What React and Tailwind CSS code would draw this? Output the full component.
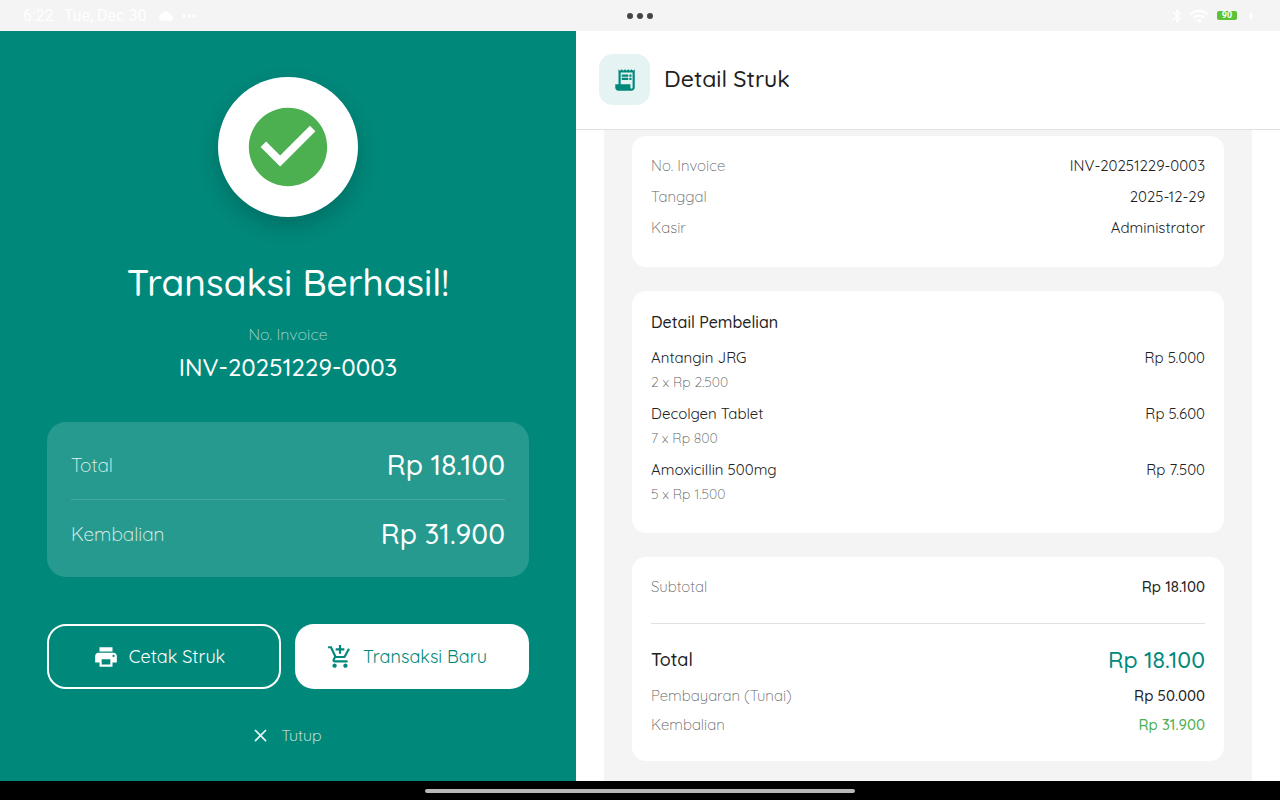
import {
  MdAddShoppingCart,
  MdBluetooth,
  MdBolt,
  MdCheckCircle,
  MdClose,
  MdCloud,
  MdMoreHoriz,
  MdPrint,
  MdReceiptLong,
  MdWifi,
} from "react-icons/md";

const info = [
  ["No. Invoice", "INV-20251229-0003"],
  ["Tanggal", "2025-12-29"],
  ["Kasir", "Administrator"],
];

const items = [
  { name: "Antangin JRG", detail: "2 x Rp 2.500", total: "Rp 5.000" },
  { name: "Decolgen Tablet", detail: "7 x Rp 800", total: "Rp 5.600" },
  { name: "Amoxicillin 500mg", detail: "5 x Rp 1.500", total: "Rp 7.500" },
];

function StatusBar() {
  return (
    <header className="grid h-[31px] shrink-0 grid-cols-3 items-center bg-[#f4f4f4] px-[23px] font-['Roboto',sans-serif] text-base text-white">
      <div className="flex items-center gap-[10px]">
        <span>6:22</span>
        <span>Tue, Dec 30</span>
        <MdCloud className="ml-[3px] size-[14px]" />
        <MdMoreHoriz className="-ml-1 size-5" />
      </div>
      <div className="flex justify-center gap-1">
        <span className="size-[6px] rounded-full bg-[#444]" />
        <span className="size-[6px] rounded-full bg-[#444]" />
        <span className="size-[6px] rounded-full bg-[#444]" />
      </div>
      <div className="flex items-center justify-end gap-1">
        <MdBluetooth className="size-4" />
        <MdWifi className="size-5" />
        <span className="ml-1 flex h-[9px] w-5 items-center justify-center rounded-[2px] bg-[#5cc234] text-[9px] leading-none font-bold">
          90
        </span>
        <MdBolt className="ml-1 size-3" />
      </div>
    </header>
  );
}

function SuccessPanel() {
  return (
    <section className="flex w-[45%] flex-col items-center bg-[#00897b] px-[47px] pt-[46px] text-white">
      <div className="flex size-[140px] items-center justify-center rounded-full bg-white shadow-[0_9px_24px_rgba(0,0,0,0.2)]">
        <MdCheckCircle className="size-[94px] text-[#4caf50]" />
      </div>
      <h1 className="mt-[41px] text-[37px] leading-[48px] font-medium">Transaksi Berhasil!</h1>
      <p className="mt-[18px] text-base leading-5 font-light text-white/70">No. Invoice</p>
      <p className="mt-2 text-[24px] leading-[30px] font-medium">INV-20251229-0003</p>

      <dl className="mt-10 w-full rounded-[19px] bg-white/15 p-6">
        <div className="flex h-[38px] items-center justify-between">
          <dt className="text-[19px] font-light text-white/90">Total</dt>
          <dd className="text-[28px] font-medium">Rp 18.100</dd>
        </div>
        <div className="mt-[15px] flex items-center justify-between border-t border-white/15 pt-[15px]">
          <dt className="text-[19px] font-light text-white/90">Kembalian</dt>
          <dd className="text-[28px] leading-[38px] font-medium">Rp 31.900</dd>
        </div>
      </dl>

      <div className="mt-[47px] grid w-full grid-cols-2 gap-[14px]">
        <button
          type="button"
          className="flex h-[65px] items-center justify-center gap-[10px] rounded-[19px] border-2 border-white pr-[10px] text-lg"
        >
          <MdPrint className="size-[26px]" />
          Cetak Struk
        </button>
        <button
          type="button"
          className="flex h-[65px] items-center justify-center gap-[10px] rounded-[19px] bg-white pr-[10px] text-lg text-[#00897b]"
        >
          <MdAddShoppingCart className="size-[26px]" />
          Transaksi Baru
        </button>
      </div>

      <button
        type="button"
        className="mt-[34px] flex items-center gap-[10px] pr-1 text-base leading-6 font-light text-white/90"
      >
        <MdClose className="size-[21px]" />
        Tutup
      </button>
    </section>
  );
}

function ReceiptPanel() {
  return (
    <section className="flex flex-1 flex-col bg-white text-[15px] text-[#212121]">
      <div className="flex items-center gap-[14px] border-b border-[#e0e0e0] px-[23px] pt-[23px] pb-6">
        <span className="flex size-[51px] items-center justify-center rounded-[14px] bg-[#e5f3f2]">
          <MdReceiptLong className="size-[26px] text-[#00897b]" />
        </span>
        <h2 className="text-[23px] font-medium">Detail Struk</h2>
      </div>

      <div className="mx-7 flex flex-1 flex-col gap-6 bg-[#f4f4f4] px-7 pt-[6px] pb-[19px]">
        <dl className="flex flex-col gap-[11px] rounded-[14px] bg-white px-[19px] pt-5 pb-[29px]">
          {info.map(([label, value]) => (
            <div key={label} className="flex justify-between leading-5">
              <dt className="font-light text-[#616161]">{label}</dt>
              <dd>{value}</dd>
            </div>
          ))}
        </dl>

        <div className="rounded-[14px] bg-white px-[19px] pt-[19px] pb-[29px]">
          <h3 className="mb-[14px] text-base leading-6 font-medium">Detail Pembelian</h3>
          <ul className="flex flex-col gap-3">
            {items.map((item) => (
              <li key={item.name}>
                <div className="flex justify-between leading-5">
                  <span>{item.name}</span>
                  <span>{item.total}</span>
                </div>
                <p className="mt-1 text-sm leading-5 font-light text-[#616161]">{item.detail}</p>
              </li>
            ))}
          </ul>
        </div>

        <dl className="rounded-[14px] bg-white px-[19px] pt-5 pb-[26px] leading-5">
          <div className="flex justify-between">
            <dt className="font-light text-[#616161]">Subtotal</dt>
            <dd className="font-medium">Rp 18.100</dd>
          </div>
          <div className="mt-[26px] flex items-center justify-between border-t border-[#e0e0e0] pt-[22px]">
            <dt className="text-lg leading-5 font-medium">Total</dt>
            <dd className="text-[23px] leading-7 font-medium text-[#00897b]">Rp 18.100</dd>
          </div>
          <div className="mt-3 flex justify-between">
            <dt className="font-light text-[#616161]">Pembayaran (Tunai)</dt>
            <dd className="font-medium">Rp 50.000</dd>
          </div>
          <div className="mt-[9px] flex justify-between">
            <dt className="font-light text-[#616161]">Kembalian</dt>
            <dd className="font-medium text-[#4caf50]">Rp 31.900</dd>
          </div>
        </dl>
      </div>
    </section>
  );
}

export default function App() {
  return (
    <div className="flex min-h-screen flex-col font-['Quicksand','Lato',sans-serif]">
      <StatusBar />
      <main className="flex flex-1">
        <SuccessPanel />
        <ReceiptPanel />
      </main>
      <footer className="flex h-[19px] shrink-0 items-center justify-center bg-black">
        <span className="h-1 w-[430px] rounded-full bg-[#b8b8b8]" />
      </footer>
    </div>
  );
}
